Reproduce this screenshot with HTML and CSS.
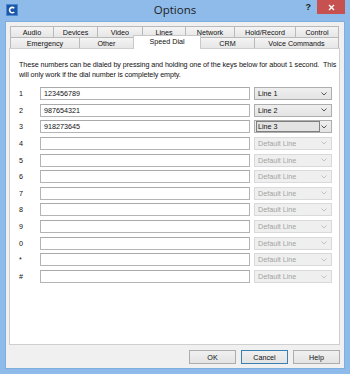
FILE: index.html
```html
<!DOCTYPE html>
<html>
<head>
<meta charset="utf-8">
<link rel="stylesheet" href="styles.css">
</head>
<body>
<div class="window">
  <div class="titlebar">
    <div class="tb-left">
      <svg class="app-icon" width="12" height="12" viewBox="0 0 12 12">
        <rect x="0.5" y="0.5" width="11" height="11" fill="#1b56a8" stroke="#4a86cf"/>
        <path d="M8.2 4.2 A2.7 2.7 0 1 0 8.2 8" fill="none" stroke="#fff" stroke-width="1.6"/>
      </svg>
    </div>
    <div class="title">Options</div>
    <div class="tb-right">
      <span class="help-q">?</span>
      <span class="close-btn">
        <svg width="7" height="7" viewBox="0 0 7 7"><path d="M1 1 L6 6 M6 1 L1 6" stroke="#fff" stroke-width="1.4"/></svg>
      </span>
    </div>
  </div>
  <div class="client">
    <div class="tabs">
      <div class="tabrow">
        <div class="tab t44">Audio</div>
        <div class="tab t45">Devices</div>
        <div class="tab t46">Video</div>
        <div class="tab t44">Lines</div>
        <div class="tab t50">Network</div>
        <div class="tab t62">Hold/Record</div>
        <div class="tab t44">Control</div>
      </div>
      <div class="tabrow">
        <div class="tab t70">Emergency</div>
        <div class="tab t55">Other</div>
        <div class="tab t68 selected">Speed Dial</div>
        <div class="tab t55">CRM</div>
        <div class="tab t85">Voice Commands</div>
      </div>
    </div>
    <div class="panel">
      <p class="intro">These numbers can be dialed by pressing and holding one of the keys below for about 1 second.&nbsp; This<br>will only work if the dial number is completely empty.</p>
      <div class="rows">
        <div class="row"><span class="key">1</span><div class="field">123456789</div><div class="combo"><span class="combo-text">Line 1</span><svg class="chev" width="6" height="4" viewBox="0 0 6 4"><path d="M0.5 0.5 L3 3 L5.5 0.5" fill="none" stroke="#555" stroke-width="1"/></svg></div></div>
        <div class="row"><span class="key">2</span><div class="field">987654321</div><div class="combo"><span class="combo-text">Line 2</span><svg class="chev" width="6" height="4" viewBox="0 0 6 4"><path d="M0.5 0.5 L3 3 L5.5 0.5" fill="none" stroke="#555" stroke-width="1"/></svg></div></div>
        <div class="row"><span class="key">3</span><div class="field">918273645</div><div class="combo focused"><span class="combo-text">Line 3</span><svg class="chev" width="6" height="4" viewBox="0 0 6 4"><path d="M0.5 0.5 L3 3 L5.5 0.5" fill="none" stroke="#555" stroke-width="1"/></svg></div></div>
        <div class="row"><span class="key">4</span><div class="field"></div><div class="combo disabled"><span class="combo-text">Default Line</span><svg class="chev" width="6" height="4" viewBox="0 0 6 4"><path d="M0.5 0.5 L3 3 L5.5 0.5" fill="none" stroke="#c2c2c2" stroke-width="1"/></svg></div></div>
        <div class="row"><span class="key">5</span><div class="field"></div><div class="combo disabled"><span class="combo-text">Default Line</span><svg class="chev" width="6" height="4" viewBox="0 0 6 4"><path d="M0.5 0.5 L3 3 L5.5 0.5" fill="none" stroke="#c2c2c2" stroke-width="1"/></svg></div></div>
        <div class="row"><span class="key">6</span><div class="field"></div><div class="combo disabled"><span class="combo-text">Default Line</span><svg class="chev" width="6" height="4" viewBox="0 0 6 4"><path d="M0.5 0.5 L3 3 L5.5 0.5" fill="none" stroke="#c2c2c2" stroke-width="1"/></svg></div></div>
        <div class="row"><span class="key">7</span><div class="field"></div><div class="combo disabled"><span class="combo-text">Default Line</span><svg class="chev" width="6" height="4" viewBox="0 0 6 4"><path d="M0.5 0.5 L3 3 L5.5 0.5" fill="none" stroke="#c2c2c2" stroke-width="1"/></svg></div></div>
        <div class="row"><span class="key">8</span><div class="field"></div><div class="combo disabled"><span class="combo-text">Default Line</span><svg class="chev" width="6" height="4" viewBox="0 0 6 4"><path d="M0.5 0.5 L3 3 L5.5 0.5" fill="none" stroke="#c2c2c2" stroke-width="1"/></svg></div></div>
        <div class="row"><span class="key">9</span><div class="field"></div><div class="combo disabled"><span class="combo-text">Default Line</span><svg class="chev" width="6" height="4" viewBox="0 0 6 4"><path d="M0.5 0.5 L3 3 L5.5 0.5" fill="none" stroke="#c2c2c2" stroke-width="1"/></svg></div></div>
        <div class="row"><span class="key">0</span><div class="field"></div><div class="combo disabled"><span class="combo-text">Default Line</span><svg class="chev" width="6" height="4" viewBox="0 0 6 4"><path d="M0.5 0.5 L3 3 L5.5 0.5" fill="none" stroke="#c2c2c2" stroke-width="1"/></svg></div></div>
        <div class="row"><span class="key">*</span><div class="field"></div><div class="combo disabled"><span class="combo-text">Default Line</span><svg class="chev" width="6" height="4" viewBox="0 0 6 4"><path d="M0.5 0.5 L3 3 L5.5 0.5" fill="none" stroke="#c2c2c2" stroke-width="1"/></svg></div></div>
        <div class="row"><span class="key">#</span><div class="field"></div><div class="combo disabled"><span class="combo-text">Default Line</span><svg class="chev" width="6" height="4" viewBox="0 0 6 4"><path d="M0.5 0.5 L3 3 L5.5 0.5" fill="none" stroke="#c2c2c2" stroke-width="1"/></svg></div></div>
      </div>
    </div>
    <div class="buttons">
      <div class="btn">OK</div>
      <div class="btn default">Cancel</div>
      <div class="btn">Help</div>
    </div>
  </div>
</div>
</body>
</html>
```

FILE: styles.css
```css
* { box-sizing: border-box; }
html, body { margin: 0; padding: 0; }
body {
  font-family: "Liberation Sans", Arial, sans-serif;
  font-size: 7.2px;
  color: #000;
  background: #8ebbe9;
}
.window {
  width: 350px;
  height: 374px;
  background: #8ebbe9;
  display: flex;
  flex-direction: column;
}
.titlebar {
  height: 21px;
  display: grid;
  grid-template-columns: 1fr auto 1fr;
  align-items: start;
}
.tb-left { display: flex; }
.app-icon { margin: 4px 0 0 6px; display: block; }
.title {
  font-family: "Open Sans", "Noto Sans", sans-serif;
  font-size: 11.5px;
  color: #222;
  line-height: 20px;
}
.tb-right {
  display: flex;
  justify-content: flex-end;
  align-items: flex-start;
}
.help-q {
  font-family: "Liberation Sans", Arial, sans-serif;
  font-weight: bold;
  font-size: 9px;
  color: #1a1a1a;
  margin: 2px 6px 0 0;
  line-height: 10px;
}
.close-btn {
  width: 28px;
  height: 14px;
  background: #c75050;
  margin-right: 5px;
  display: flex;
  align-items: center;
  justify-content: center;
}
.client {
  flex: 1;
  margin: 0 5px 5px 5px;
  background: #f0f0f0;
  border: 1px solid #7eaee0;
  padding: 4px 4px 0 3px;
  display: flex;
  flex-direction: column;
}
.tabs {
  display: flex;
  flex-direction: column;
  padding: 0 1px;
}
.tabrow {
  display: flex;
  height: 11px;
}
.tab {
  height: 11px;
  border: 1px solid #b9b9b9;
  border-bottom: none;
  background: linear-gradient(#f4f4f4, #e6e6e6);
  margin-left: -1px;
  display: flex;
  align-items: center;
  justify-content: center;
  white-space: nowrap;
  line-height: 9px;
  color: #111;
}
.tab:first-child { margin-left: 0; }
.tab.selected {
  background: #fff;
  height: 14px;
  margin-top: -2px;
  margin-bottom: -1px;
  position: relative;
  z-index: 2;
  border-color: #c8c8c8;
  align-items: flex-start;
  padding-top: 1px;
}
.t44 { width: 44px; }
.t45 { width: 45px; }
.t46 { width: 46px; }
.t50 { width: 50px; }
.t62 { width: 62px; }
.t70 { width: 70px; }
.t55 { width: 55px; }
.t68 { width: 68px; }
.t85 { width: 85px; }
.panel {
  height: 297px;
  background: #fff;
  border: 1px solid #cfcfcf;
  padding: 11px 0 0 9px;
  position: relative;
  z-index: 1;
}
.intro {
  margin: 0;
  line-height: 9.5px;
  white-space: nowrap;
  color: #111;
  letter-spacing: -0.08px;
}
.rows {
  margin-top: 8px;
  display: flex;
  flex-direction: column;
  gap: 3.65px;
}
.row {
  display: grid;
  grid-template-columns: 21px 210px 78px;
  column-gap: 0;
  align-items: center;
  height: 13px;
}
.key { color: #111; }
.field {
  height: 13px;
  border: 1px solid #b4b4b4;
  border-top-color: #a9a9a9;
  background: #fff;
  padding-left: 3px;
  line-height: 11px;
  color: #111;
}
.combo {
  margin-left: 4px;
  height: 13px;
  width: 78px;
  border: 1px solid #adadad;
  background: linear-gradient(#efefef, #e4e4e4);
  display: flex;
  align-items: center;
  justify-content: space-between;
  padding: 0 4px 0 3px;
}
.combo-text { line-height: 11px; color: #111; }
.chev { display: block; }
.combo.focused { padding-left: 1px; }
.combo.focused .combo-text {
  width: 64px;
  height: 11px;
  border: 1px solid #7f7f7f;
  background: #e3e3e3;
  padding-left: 1px;
  line-height: 9px;
}
.combo.disabled {
  border-color: #d9d9d9;
  background: #efefef;
}
.combo.disabled .combo-text { color: #a3a3a3; }
.buttons {
  margin-top: 5px;
  display: flex;
  justify-content: flex-end;
  gap: 5px;
  padding-right: 0;
}
.btn {
  width: 47px;
  height: 14px;
  border: 1px solid #adadad;
  background: linear-gradient(#f0f0f0, #e3e3e3);
  display: flex;
  align-items: center;
  justify-content: center;
  color: #111;
}
.btn.default { border-color: #3c7fb1; }
```
